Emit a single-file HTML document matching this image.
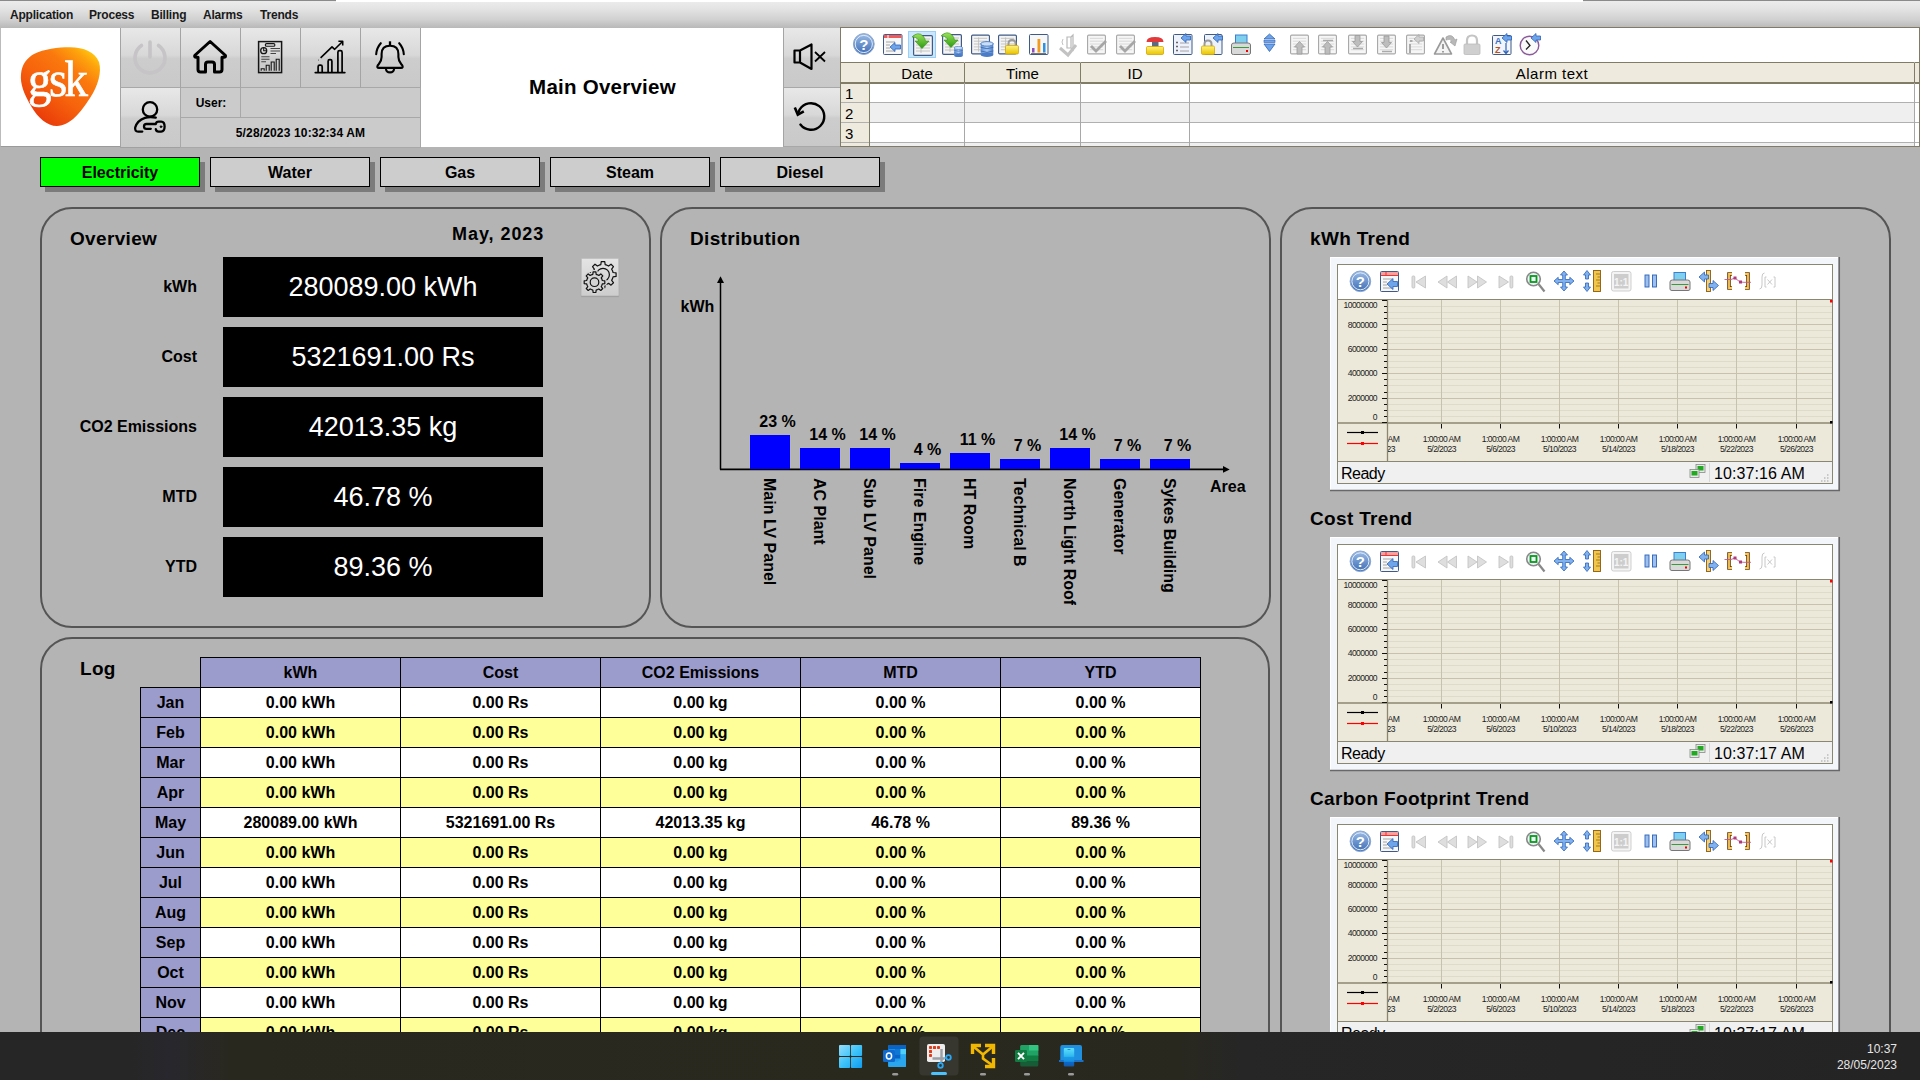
<!DOCTYPE html>
<html><head><meta charset="utf-8">
<style>
*{margin:0;padding:0;box-sizing:border-box}
html,body{width:1920px;height:1080px;overflow:hidden}
body{position:relative;background:#b4b4b4;font-family:"Liberation Sans",sans-serif;color:#000}
.a{position:absolute}
.b{font-weight:bold}
/* menu */
#menu{left:0;top:0;width:1920px;height:28px;background:linear-gradient(#ececec,#e3e3e3 30%,#d0d0d0 70%,#b8b8b8);border-top:1px solid #8a8a8a}
#menu span{position:absolute;top:7px;font-size:12px;font-weight:bold;color:#1a1a1a;letter-spacing:-0.2px}
/* header */
.hbtn{position:absolute;background:linear-gradient(#e8e8e8,#d8d8d8 46%,#cdcdcd 52%,#c9c9c9);border-left:1px solid #a4a4a4;border-bottom:1px solid #a8a8a8}
.cell{position:absolute;background:#cbcbcb;border-left:1px solid #a8a8a8;border-bottom:1px solid #a8a8a8}
/* tabs */
.tab{position:absolute;top:157px;width:160px;height:30px;border:1px solid #000;background:#cdcdcd;font-size:16px;font-weight:bold;text-align:center;line-height:29px;box-shadow:5px 5px 0 #7b7b7b}
/* panels */
.panel{position:absolute;border:2px solid #555;border-radius:32px}
.ptitle{position:absolute;font-size:19px;font-weight:bold;letter-spacing:0.33px}
.lbl{position:absolute;font-size:16px;font-weight:bold;text-align:right;width:160px}
.val{position:absolute;left:223px;width:320px;height:60px;background:#000;color:#fff;font-size:27px;text-align:center;line-height:60px}
/* taskbar */
#task{left:0;top:1032px;width:1920px;height:48px;background:linear-gradient(90deg,#262626 0,#262626 130px,#28272d 170px,#29281f 230px,#2a291e 900px,#29281f 1180px,#262626 1240px,#242424 1920px)}
</style></head><body>

<div id="menu" class="a">
<div class="a" style="left:336px;top:-1px;width:1247px;height:2px;background:#fff"></div>
<span style="left:10px">Application</span>
<span style="left:89px">Process</span>
<span style="left:151px">Billing</span>
<span style="left:203px">Alarms</span>
<span style="left:260px">Trends</span>
</div>

<!-- header -->
<div class="a" style="left:0;top:28px;width:120px;height:119px;background:#fff;border-left:1px solid #bbb;border-bottom:1px solid #9a9a9a"></div>
<div class="hbtn" style="left:120px;top:28px;width:60px;height:60px"></div>
<div class="hbtn" style="left:180px;top:28px;width:60px;height:60px"></div>
<div class="hbtn" style="left:240px;top:28px;width:60px;height:60px"></div>
<div class="hbtn" style="left:300px;top:28px;width:60px;height:60px"></div>
<div class="hbtn" style="left:360px;top:28px;width:61px;height:60px;border-right:1px solid #a4a4a4"></div>
<div class="hbtn" style="left:120px;top:88px;width:60px;height:60px;border-bottom-color:#a0a0a0"></div>
<div class="cell" style="left:180px;top:88px;width:60px;height:30px"></div>
<div class="cell" style="left:240px;top:88px;width:181px;height:30px;border-right:1px solid #a8a8a8"></div>
<div class="cell" style="left:180px;top:118px;width:241px;height:30px;border-right:1px solid #a8a8a8"></div>
<div class="a b" style="left:181px;top:96px;width:60px;text-align:center;font-size:12px">User:</div>
<div class="a b" style="left:180px;top:126px;width:241px;text-align:center;font-size:12px;letter-spacing:0.15px">5/28/2023 10:32:34 AM</div>
<div class="a" style="left:421px;top:28px;width:363px;height:119px;background:#fff"></div>
<div class="hbtn" style="left:783px;top:28px;width:57px;height:60px"></div>
<div class="hbtn" style="left:783px;top:88px;width:57px;height:59px"></div>
<div class="a b" style="left:421px;top:75px;width:363px;text-align:center;font-size:20.5px;letter-spacing:0.25px">Main Overview</div>
<svg class="a" style="left:0;top:0" width="850" height="150" viewBox="0 0 850 150">
<defs>
<linearGradient id="gskg" x1="0.92" y1="0.08" x2="0.2" y2="0.95">
<stop offset="0" stop-color="#ffc60e"/>
<stop offset="0.1" stop-color="#fda40c"/>
<stop offset="0.3" stop-color="#fa780e"/>
<stop offset="0.6" stop-color="#f6620c"/>
<stop offset="1" stop-color="#e8360a"/>
</linearGradient>
</defs>
<path d="M57 126 C47 126 38 118 31 106 C24 94 20 84 21 74 C22 64 27 58 34 54 C44 49 58 47.3 70 47.3 C84 47.5 95 52 99 62 C102 72 98 86 90 98 C81 112 70 126 57 126 Z" fill="url(#gskg)"/>
<g fill="none" stroke="#c6c4c6" stroke-width="3.6" stroke-linecap="round">
<path d="M141.5 45.5 A15 15 0 1 0 158.5 45.5"/>
<path d="M150 42 L150 57"/>
</g>
<path d="M205.5 72 L205.5 64.5 Q205.5 62 208 62 L212 62 Q214.5 62 214.5 64.5 L214.5 72 L219.5 72 Q222 72 222 69.5 L222 57.2 L224 57.2 Q226.5 57 225 55 L210.1 41.5 L195.2 55 Q193.7 57 196 57.2 L198 57.2 L198 69.5 Q198 72 200.5 72 Z" fill="none" stroke="#000" stroke-width="3" stroke-linejoin="round"/>
<g fill="none" stroke="#151515" stroke-width="1.5">
<rect x="258.6" y="41.6" width="23" height="31"/>
<rect x="265.3" y="43.6" width="9.6" height="2.6" rx="1.3" stroke-width="1.1"/>
<circle cx="263.7" cy="50.7" r="3" stroke-width="1.3"/>
<path d="M263.7 47.7 L263.7 50.7 L266.7 50.7" stroke-width="1.1"/>
<path d="M270.5 48.5 H280 M270.5 51 H280 M270.5 53.5 H276 M261.3 56.8 H269.5 M261.3 59.2 H269.5 M261.3 61.7 H266" stroke-width="1.1" stroke="#444"/>
<path d="M261.2 70.8 V68.7 H264.2 V70.8 M266.2 70.8 V65.3 H269.2 V70.8 M271.2 70.8 V62 H274.2 V70.8 M276.2 70.8 V59.3 H279.2 V70.8" stroke-width="1.1"/>
</g>
<g fill="none" stroke="#000" stroke-width="1.7" stroke-linejoin="round">
<path d="M315.3 72.6 H344.8" stroke-linecap="round" stroke-width="1.8"/>
<path d="M318.1 72.2 V66.8 Q318.1 65.2 319.7 65.2 H320.6 Q322.2 65.2 322.2 66.8 V72.2"/>
<path d="M328.1 72.2 V61.3 Q328.1 59.7 329.7 59.7 H330.3 Q331.9 59.7 331.9 61.3 V72.2"/>
<path d="M337.9 72.2 V52.3 Q337.9 50.7 339.5 50.7 H340.5 Q342.1 50.7 342.1 52.3 V72.2"/>
<path d="M320.6 57.8 L332 46.8 L334.7 49.3 L342.3 41.8" stroke-width="1.6"/>
<path d="M338.4 41.3 H342.7 V45.6" stroke-width="1.6"/>
<circle cx="318.5" cy="60" r="0.5" fill="#333" stroke="none"/>
</g>
<g fill="none" stroke="#000" stroke-width="2.1" stroke-linecap="round" stroke-linejoin="round">
<path d="M390 41.3 V45.6" stroke-linecap="butt" stroke-width="2.3"/>
<path d="M381.6 57 V54 Q381.6 45.8 390 45.8 Q398.4 45.8 398.4 54 V57 Q398.4 61 401.3 64.3 L402.2 65.3 Q403.6 67.9 401 67.9 H379 Q376.4 67.9 377.8 65.3 L378.7 64.3 Q381.6 61 381.6 57 Z"/>
<path d="M385.8 68.3 Q386.3 72.4 390 72.4 Q393.7 72.4 394.2 68.3"/>
<path d="M380.8 43.2 Q376.6 47.8 376.2 54.3"/>
<path d="M399.2 43.2 Q403.4 47.8 403.8 54.3"/>
</g>
<g fill="none" stroke="#000" stroke-width="2.3" stroke-linecap="round" stroke-linejoin="round">
<circle cx="150" cy="109.4" r="7.2"/>
<path d="M155.8 117.6 Q150 116.3 145 117.8 Q137 120.5 135.2 127.5 Q134.6 131.6 138.2 131.6 H142.3"/>
<path d="M150.8 128.8 H146.5 Q144 128.8 144 126.4 Q144 124 146.5 124 H155.8 Q156.3 121.6 158.6 121.6 H161.2 Q164.6 121.6 164.6 126.6 Q164.6 131.6 161.2 131.6 H158.6 Q156.3 131.6 155.8 129.2"/>
<circle cx="161" cy="126.7" r="0.9" fill="#000" stroke-width="0.8"/>
</g>
<g fill="none" stroke="#000" stroke-width="2.2" stroke-linejoin="round">
<path d="M794.5 50.5 H800 L811.5 44.5 V69 L800 62.5 H794.5 Z M800 50.5 V62.5"/>
<path d="M815 52 L825 61.5 M825 52 L815 61.5" stroke-width="1.8"/>
</g>
<g fill="none" stroke="#000" stroke-width="2.4" stroke-linecap="round">
<path d="M800.4 124.6 A13.3 13.3 0 1 0 799.6 109.6 L798.3 112.8"/>
<path d="M794.8 107.6 L797.8 114.6 L803.8 111.4" stroke-width="2.6" stroke-linejoin="miter" stroke-linecap="butt"/>
</g>
</svg>
<div class="a" style="left:28px;top:48px;width:70px;height:62px;color:#fff;font-family:'Liberation Serif',serif;font-size:51px;line-height:62px;letter-spacing:-2.8px;-webkit-text-stroke:0.7px #fff;transform:scale(0.92,1);transform-origin:0 0">gsk</div>


<!-- alarm control -->
<div class="a" style="left:840px;top:27px;width:1080px;height:120px;background:#fff;border:1px solid #7f7b64;overflow:hidden">
 <div class="a" style="left:0;top:34px;width:1078px;height:21px;background:#eeeadd;border-top:1px solid #807c66;border-bottom:1px solid #807c66"></div>
 <div class="a" style="left:0;top:55px;width:28px;height:70px;background:#eeeadd"></div>
 <div class="a" style="left:28px;top:75px;width:1046px;height:20px;background:#efefef"></div>
 <div class="a" style="left:28px;top:115px;width:1046px;height:20px;background:#efefef"></div>
 <div class="a" style="left:0;top:74px;width:1078px;height:1px;background:#b0b0b0"></div>
 <div class="a" style="left:0;top:94px;width:1078px;height:1px;background:#b0b0b0"></div>
 <div class="a" style="left:0;top:114px;width:1078px;height:1px;background:#b0b0b0"></div>
 <div class="a" style="left:0;top:55px;width:1078px;height:1px;background:#807c66"></div>
 <div class="a" style="left:28px;top:34px;width:1px;height:90px;background:#807c66"></div>
 <div class="a" style="left:123px;top:34px;width:1px;height:90px;background:#a8a8a8"></div>
 <div class="a" style="left:239px;top:34px;width:1px;height:90px;background:#a8a8a8"></div>
 <div class="a" style="left:348px;top:34px;width:1px;height:90px;background:#a8a8a8"></div>
 <div class="a" style="left:1073px;top:34px;width:1px;height:90px;background:#a8a8a8"></div>
 <div class="a" style="left:123px;top:35px;width:1px;height:20px;background:#807c66"></div>
 <div class="a" style="left:239px;top:35px;width:1px;height:20px;background:#807c66"></div>
 <div class="a" style="left:348px;top:35px;width:1px;height:20px;background:#807c66"></div>
 <div class="a" style="left:1073px;top:35px;width:1px;height:20px;background:#807c66"></div>
 <div class="a" style="left:29px;top:37px;width:94px;text-align:center;font-size:15px">Date</div>
 <div class="a" style="left:124px;top:37px;width:115px;text-align:center;font-size:15px">Time</div>
 <div class="a" style="left:240px;top:37px;width:108px;text-align:center;font-size:15px">ID</div>
 <div class="a" style="left:349px;top:37px;width:724px;text-align:center;font-size:15px;letter-spacing:0.5px">Alarm text</div>
 <div class="a" style="left:4px;top:57px;font-size:15px">1</div>
 <div class="a" style="left:4px;top:77px;font-size:15px">2</div>
 <div class="a" style="left:4px;top:97px;font-size:15px">3</div>
</div>
<div class="a" style="left:908px;top:31px;width:28px;height:27px;background:#cce6fb;border:1px solid #99d0f8"></div>
<svg class="a" style="left:840px;top:28px" width="720" height="34" viewBox="840 28 720 34">
<defs>
 <linearGradient id="blu" x1="0" y1="0" x2="0" y2="1"><stop offset="0" stop-color="#9dbde6"/><stop offset="1" stop-color="#3d6db5"/></linearGradient>
 <linearGradient id="grn" x1="0" y1="0" x2="0" y2="1"><stop offset="0" stop-color="#9be35a"/><stop offset="1" stop-color="#2a9a10"/></linearGradient>
 <linearGradient id="yel" x1="0" y1="0" x2="0" y2="1"><stop offset="0" stop-color="#fff27a"/><stop offset="1" stop-color="#e9c400"/></linearGradient>
 <linearGradient id="dbg" x1="0" y1="0" x2="1" y2="0"><stop offset="0" stop-color="#5c8fd6"/><stop offset="0.5" stop-color="#a9c9f2"/><stop offset="1" stop-color="#4a7cc8"/></linearGradient>
 <symbol id="doc" viewBox="0 0 20 21"><rect x="0.6" y="0.6" width="18.8" height="19.8" rx="1.2" fill="#f4f4f4" stroke="#3f5a86" stroke-width="1.2"/><path d="M3 4H17M3 7H17M3 10H17M3 13H17M3 16H17M8 3V18" stroke="#bdbdbd" stroke-width="0.9"/></symbol>
 <symbol id="gdoc" viewBox="0 0 20 21"><rect x="0.6" y="0.6" width="18.8" height="19.8" rx="1.2" fill="#f6f6f6" stroke="#a9a9a9" stroke-width="1.2"/><path d="M3 4H17M3 7H17M3 10H17M3 13H17M3 16H17" stroke="#d4d4d4" stroke-width="0.9"/></symbol>
 <symbol id="db" viewBox="0 0 12 14"><rect x="0.5" y="2" width="11" height="10" fill="url(#dbg)"/><ellipse cx="6" cy="2.5" rx="5.5" ry="2" fill="#c8ddf7" stroke="#4a7cc8" stroke-width="0.8"/><ellipse cx="6" cy="12" rx="5.5" ry="2" fill="#4a7cc8"/><path d="M0.5 5.5Q6 8 11.5 5.5M0.5 8.7Q6 11.2 11.5 8.7" stroke="#3d6db5" stroke-width="0.8" fill="none"/></symbol>
 <symbol id="lock" viewBox="0 0 14 15"><path d="M3.5 7V4.5Q3.5 1 7 1Q10.5 1 10.5 4.5V7" fill="none" stroke="#9a9a9a" stroke-width="2"/><rect x="0.5" y="6.5" width="13" height="8.5" rx="1.2" fill="url(#yel)" stroke="#d6a800" stroke-width="0.8"/></symbol>
</defs>
<!-- 1 help -->
<circle cx="863.8" cy="44" r="10.4" fill="url(#blu)" stroke="#8aa6cf" stroke-width="1"/><circle cx="863.8" cy="44" r="8.6" fill="none" stroke="#e2ecf8" stroke-width="1"/>
<text x="863.8" y="49.5" font-size="15" font-weight="bold" fill="#fff" text-anchor="middle" font-family="Liberation Sans">?</text>
<!-- 2 -->
<rect x="883.5" y="34.5" width="18.5" height="20" rx="1" fill="#f7f7f7" stroke="#3f5a86"/><rect x="884" y="35" width="17.5" height="3" fill="#ef5b5b"/><path d="M888 35V38" stroke="#fff"/>
<path d="M886 42H895M886 45H890M886 48H890M886 51H895" stroke="#9a9a9a" stroke-width="0.9"/>
<path d="M890 47L895 42.5V45H900.5V49H895V51.5Z" fill="#6ea4ea" stroke="#2d62b8" stroke-width="0.8"/>
<!-- 3 -->
<use href="#doc" x="913" y="35" width="20" height="21"/>
<path d="M912 37Q918 31 923 36Q925 38 925.5 41H929L922 48.5L915 41H918.5Q918 37.5 913 37Z" fill="url(#grn)" stroke="#2f8e14" stroke-width="0.6"/>
<!-- 4 -->
<use href="#doc" x="942" y="34" width="20" height="21"/>
<path d="M941 36Q947 30 952 35Q954 37 954.5 40H958L951 47.5L944 40H947.5Q947 36.5 942 36Z" fill="url(#grn)" stroke="#2f8e14" stroke-width="0.6"/>
<use href="#db" x="953" y="46" width="11" height="11"/>
<!-- 5 -->
<use href="#doc" x="971" y="34" width="19" height="21"/>
<use href="#db" x="980" y="41" width="14" height="16"/>
<!-- 6 -->
<use href="#doc" x="998" y="34" width="19" height="21"/>
<use href="#lock" x="1005" y="38" width="14" height="17"/>
<!-- 7 -->
<rect x="1029.5" y="34.5" width="18.5" height="20" rx="1" fill="#f7f7f7" stroke="#3f5a86"/>
<rect x="1032" y="48" width="2.5" height="4.5" fill="#8a4fb8"/><rect x="1037.5" y="39" width="2.8" height="13.5" fill="#f29a1e"/><rect x="1043" y="43" width="2.5" height="9.5" fill="#2e92e0"/><path d="M1031 53.5H1046" stroke="#555" stroke-width="0.8"/>
<!-- 8 disabled speaker -->
<path d="M1067 37H1071V48H1067Z M1071 37L1073 35V50L1071 48" fill="none" stroke="#b8b8b8" stroke-width="1.2"/>
<path d="M1060 48L1068 55L1076 45" fill="none" stroke="#c2c2c2" stroke-width="3"/>
<path d="M1063 39Q1061 42 1063 45" fill="none" stroke="#c2c2c2" stroke-width="1"/>
<!-- 9, 10 gray doc check -->
<use href="#gdoc" x="1087" y="34" width="19" height="21"/>
<path d="M1091 46L1096 51L1106 41" fill="none" stroke="#a6a6a6" stroke-width="2.8"/>
<use href="#gdoc" x="1116" y="34" width="19" height="21"/>
<path d="M1120 46L1125 51L1135 41" fill="none" stroke="#a6a6a6" stroke-width="2.8"/>
<!-- 11 red button -->
<path d="M1146.5 42Q1146.5 37 1155 37Q1163.5 37 1163.5 42Z" fill="#e23a3a"/><rect x="1152" y="42" width="6.5" height="5" fill="#5d6a80"/>
<rect x="1146.5" y="46.5" width="17" height="8" rx="1.2" fill="url(#yel)" stroke="#d4a600" stroke-width="0.8"/>
<!-- 12 list arrow -->
<rect x="1173.5" y="34.5" width="18.5" height="20" rx="1" fill="#eef3fb" stroke="#3f5a86"/>
<path d="M1176 42.5H1178M1176 46.5H1178M1176 50.5H1178" stroke="#666" stroke-width="1.5"/><path d="M1180 43H1189M1180 47H1189M1180 51H1189" stroke="#9a9a9a" stroke-width="0.9"/>
<path d="M1181 38L1186 33.5V36H1190.5V40H1186V42.5Z" fill="#6ea4ea" stroke="#2d62b8" stroke-width="0.8"/>
<!-- 13 lock arrow -->
<rect x="1204.5" y="34.5" width="17.5" height="20" rx="1" fill="#eef3fb" stroke="#3f5a86"/>
<use href="#lock" x="1201" y="38" width="14" height="18"/>
<path d="M1213 38L1218 33.5V36H1222.5V40H1218V42.5Z" fill="#6ea4ea" stroke="#2d62b8" stroke-width="0.8"/>
<!-- 14 printer -->
<rect x="1235.5" y="35" width="11.5" height="11" fill="#7fd0ef" stroke="#3b7fd0"/>
<path d="M1231.5 45Q1231.5 43 1234 43H1248Q1250.5 43 1250.5 45V53Q1250.5 54.5 1248.5 54.5H1233.5Q1231.5 54.5 1231.5 53Z" fill="#d9d9d9" stroke="#777"/>
<path d="M1233 47.5H1249" stroke="#3a9a3a" stroke-width="1"/><rect x="1246" y="50" width="2" height="2" fill="#e00"/>
<!-- 15 up/down -->
<path d="M1264 39L1269.5 34L1275 39Z M1264 44L1269.5 51.5L1275 44Z" fill="#6ea4ea" stroke="#2d62b8" stroke-width="0.8"/><rect x="1264" y="40.5" width="11" height="2" fill="#6ea4ea" stroke="#2d62b8" stroke-width="0.6"/>
<!-- 16-19 gray docs arrows -->
<use href="#gdoc" x="1290" y="34" width="19" height="21"/><path d="M1294.5 47L1299.5 41.5L1304.5 47H1302V54H1297V47Z" fill="#bdbdbd" stroke="#9a9a9a" stroke-width="0.8"/>
<use href="#gdoc" x="1318" y="34" width="19" height="21"/><path d="M1322.5 47L1327.5 41.5L1332.5 47H1330V54H1325V47Z" fill="#bdbdbd" stroke="#9a9a9a" stroke-width="0.8"/><path d="M1323 40.5H1333" stroke="#aaa" stroke-width="1.5"/>
<use href="#gdoc" x="1348" y="34" width="19" height="21"/><path d="M1352.5 41.5L1357.5 47L1362.5 41.5H1360V35.5H1355V41.5Z" fill="#bdbdbd" stroke="#9a9a9a" stroke-width="0.8"/><path d="M1353 48.5H1363" stroke="#aaa" stroke-width="1.5"/>
<use href="#gdoc" x="1377" y="34" width="19" height="21"/><path d="M1381.5 42.5L1386.5 48L1391.5 42.5H1389V36H1384V42.5Z" fill="#bdbdbd" stroke="#9a9a9a" stroke-width="0.8"/><path d="M1382 51.5H1392" stroke="#aaa" stroke-width="1.5"/>
<use href="#gdoc" x="1406" y="34" width="19" height="21"/><path d="M1410 41H1412.5M1410 44V53" stroke="#aaa" stroke-width="2"/><path d="M1414 39L1419 34.5V37H1423.5V41H1419V43.5Z" fill="#d0d0d0" stroke="#aaa" stroke-width="0.8"/>
<!-- 21 warning -->
<path d="M1443 38L1434.5 54H1451.5Z" fill="#f4f4f4" stroke="#9a9a9a" stroke-width="1.6" stroke-linejoin="round"/><path d="M1443 44V49M1443 51V52.5" stroke="#888" stroke-width="1.6"/>
<path d="M1446 37Q1452 33 1455 40L1457 39L1455 46L1450 42L1452 41.5Q1450 38 1446 40Z" fill="#b8b8b8" stroke="#999" stroke-width="0.6"/>
<!-- 22 gray lock -->
<path d="M1467 44V40.5Q1467 35.5 1472 35.5Q1477 35.5 1477 40.5V44" fill="none" stroke="#c4c4c4" stroke-width="2.2"/><rect x="1464" y="44" width="16" height="10.5" rx="1.2" fill="#cfcfcf" stroke="#bbb" stroke-width="0.8"/>
<!-- 23 AZ -->
<rect x="1492.5" y="35.5" width="18.5" height="19" rx="1" fill="#f2f6fc" stroke="#3f5a86"/>
<text x="1495" y="44" font-size="9" font-weight="bold" fill="#3b6fbf" font-family="Liberation Sans">A</text><text x="1495" y="53" font-size="9" font-weight="bold" fill="#b5551d" font-family="Liberation Sans">Z</text>
<path d="M1506 43V53M1503.5 50.5L1506 53.5L1508.5 50.5" fill="none" stroke="#2d62b8" stroke-width="1.2"/>
<path d="M1502 38L1507 33.5V36H1511.5V40H1507V42.5Z" fill="#6ea4ea" stroke="#2d62b8" stroke-width="0.8"/>
<!-- 24 clock -->
<circle cx="1529.5" cy="45.5" r="9.3" fill="#fafafa" stroke="#8a5a9a" stroke-width="1.4"/><path d="M1526 40.5L1530 45.5L1526 49.5" fill="none" stroke="#222" stroke-width="1.3"/>
<path d="M1531 38L1536 33.5V36H1540.5V40H1536V42.5Z" fill="#6ea4ea" stroke="#2d62b8" stroke-width="0.8"/>
</svg>

<!-- tabs -->
<div class="tab" style="left:40px;background:#00ff00">Electricity</div>
<div class="tab" style="left:210px">Water</div>
<div class="tab" style="left:380px">Gas</div>
<div class="tab" style="left:550px">Steam</div>
<div class="tab" style="left:720px">Diesel</div>

<!-- panels -->
<div class="panel" style="left:40px;top:207px;width:611px;height:421px"></div>
<div class="panel" style="left:660px;top:207px;width:611px;height:421px"></div>
<div class="panel" style="left:1280px;top:207px;width:611px;height:900px"></div>
<div class="panel" style="left:40px;top:637px;width:1230px;height:500px"></div>

<div class="ptitle" style="left:70px;top:228px">Overview</div>
<div class="a b" style="left:452px;top:224px;font-size:18px;letter-spacing:0.95px">May, 2023</div>
<div class="a" style="left:581px;top:258px;width:38px;height:38px;background:linear-gradient(#e4e4e4,#cdcdcd);border:1px solid #c2c2c2;border-radius:1px;box-shadow:0 1px 1px rgba(0,0,0,0.12)"></div>
<svg class="a" style="left:576px;top:252px" width="50" height="50" viewBox="576 252 50 50">
<path d="M599.06 265.18 L600.83 264.63 L601.24 261.62 L604.76 261.62 L605.17 264.63 L606.94 265.18 L608.59 266.05 L611.01 264.21 L613.49 266.69 L611.65 269.11 L612.52 270.76 L613.07 272.53 L616.08 272.94 L616.08 276.46 L613.07 276.87 L612.52 278.64 L611.65 280.29 L613.49 282.71 L611.01 285.19 L608.59 283.35 L606.94 284.22 L605.17 284.77 L604.76 287.78 L601.24 287.78 L600.83 284.77 L599.06 284.22 L597.41 283.35 L594.99 285.19 L592.51 282.71 L594.35 280.29 L593.48 278.64 L592.93 276.87 L589.92 276.46 L589.92 272.94 L592.93 272.53 L593.48 270.76 L594.35 269.11 L592.51 266.69 L594.99 264.21 L597.41 266.05Z" fill="none" stroke="#111" stroke-width="1.2" stroke-linejoin="round"/>
<circle cx="603" cy="274.7" r="6.4" fill="none" stroke="#111" stroke-width="1.2"/>
<path d="M591.44 274.81 L592.82 274.38 L593.12 271.89 L595.88 271.89 L596.18 274.38 L597.56 274.81 L598.84 275.48 L600.81 273.93 L602.77 275.89 L601.22 277.86 L601.89 279.14 L602.32 280.52 L604.81 280.82 L604.81 283.58 L602.32 283.88 L601.89 285.26 L601.22 286.54 L602.77 288.51 L600.81 290.47 L598.84 288.92 L597.56 289.59 L596.18 290.02 L595.88 292.51 L593.12 292.51 L592.82 290.02 L591.44 289.59 L590.16 288.92 L588.19 290.47 L586.23 288.51 L587.78 286.54 L587.11 285.26 L586.68 283.88 L584.19 283.58 L584.19 280.82 L586.68 280.52 L587.11 279.14 L587.78 277.86 L586.23 275.89 L588.19 273.93 L590.16 275.48Z" fill="#d4d4d4" stroke="#d4d4d4" stroke-width="4" stroke-linejoin="round"/>
<path d="M591.44 274.81 L592.82 274.38 L593.12 271.89 L595.88 271.89 L596.18 274.38 L597.56 274.81 L598.84 275.48 L600.81 273.93 L602.77 275.89 L601.22 277.86 L601.89 279.14 L602.32 280.52 L604.81 280.82 L604.81 283.58 L602.32 283.88 L601.89 285.26 L601.22 286.54 L602.77 288.51 L600.81 290.47 L598.84 288.92 L597.56 289.59 L596.18 290.02 L595.88 292.51 L593.12 292.51 L592.82 290.02 L591.44 289.59 L590.16 288.92 L588.19 290.47 L586.23 288.51 L587.78 286.54 L587.11 285.26 L586.68 283.88 L584.19 283.58 L584.19 280.82 L586.68 280.52 L587.11 279.14 L587.78 277.86 L586.23 275.89 L588.19 273.93 L590.16 275.48Z" fill="#d4d4d4" stroke="#111" stroke-width="1.2" stroke-linejoin="round"/>
<circle cx="594.5" cy="282.2" r="4.3" fill="none" stroke="#111" stroke-width="1.2"/>
</svg>
<div class="lbl" style="left:37px;top:278px">kWh</div>
<div class="lbl" style="left:37px;top:348px">Cost</div>
<div class="lbl" style="left:37px;top:418px">CO2 Emissions</div>
<div class="lbl" style="left:37px;top:488px">MTD</div>
<div class="lbl" style="left:37px;top:558px">YTD</div>
<div class="val" style="top:257px">280089.00 kWh</div>
<div class="val" style="top:327px">5321691.00 Rs</div>
<div class="val" style="top:397px">42013.35 kg</div>
<div class="val" style="top:467px">46.78 %</div>
<div class="val" style="top:537px">89.36 %</div>

<div class="ptitle" style="left:690px;top:228px">Distribution</div>
<svg class="a" style="left:660px;top:260px" width="600" height="360" viewBox="660 260 600 360">
<path d="M720.5 469.5V281" stroke="#000" stroke-width="1.5"/><path d="M717 283L720.5 276.3L724 283Z" fill="#000"/>
<path d="M720 469.4H1224" stroke="#000" stroke-width="1.6"/><path d="M1223 466L1229.7 469.4L1223 472.8Z" fill="#000"/>
<rect x="750" y="435" width="40" height="34" fill="#0000ff"/>
<text x="777.5" y="427" font-size="16" font-weight="bold" text-anchor="middle" font-family="Liberation Sans">23 %</text>
<text transform="translate(764,478) rotate(90)" font-size="16" font-weight="bold" font-family="Liberation Sans">Main LV Panel</text>
<rect x="800" y="448" width="40" height="21" fill="#0000ff"/>
<text x="827.5" y="440" font-size="16" font-weight="bold" text-anchor="middle" font-family="Liberation Sans">14 %</text>
<text transform="translate(814,478) rotate(90)" font-size="16" font-weight="bold" font-family="Liberation Sans">AC Plant</text>
<rect x="850" y="448" width="40" height="21" fill="#0000ff"/>
<text x="877.5" y="440" font-size="16" font-weight="bold" text-anchor="middle" font-family="Liberation Sans">14 %</text>
<text transform="translate(864,478) rotate(90)" font-size="16" font-weight="bold" font-family="Liberation Sans">Sub LV Panel</text>
<rect x="900" y="463" width="40" height="6" fill="#0000ff"/>
<text x="927.5" y="455" font-size="16" font-weight="bold" text-anchor="middle" font-family="Liberation Sans">4 %</text>
<text transform="translate(914,478) rotate(90)" font-size="16" font-weight="bold" font-family="Liberation Sans">Fire Engine</text>
<rect x="950" y="453" width="40" height="16" fill="#0000ff"/>
<text x="977.5" y="445" font-size="16" font-weight="bold" text-anchor="middle" font-family="Liberation Sans">11 %</text>
<text transform="translate(964,478) rotate(90)" font-size="16" font-weight="bold" font-family="Liberation Sans">HT Room</text>
<rect x="1000" y="459" width="40" height="10" fill="#0000ff"/>
<text x="1027.5" y="451" font-size="16" font-weight="bold" text-anchor="middle" font-family="Liberation Sans">7 %</text>
<text transform="translate(1014,478) rotate(90)" font-size="16" font-weight="bold" font-family="Liberation Sans">Technical B</text>
<rect x="1050" y="448" width="40" height="21" fill="#0000ff"/>
<text x="1077.5" y="440" font-size="16" font-weight="bold" text-anchor="middle" font-family="Liberation Sans">14 %</text>
<text transform="translate(1064,478) rotate(90)" font-size="16" font-weight="bold" font-family="Liberation Sans">North Light Roof</text>
<rect x="1100" y="459" width="40" height="10" fill="#0000ff"/>
<text x="1127.5" y="451" font-size="16" font-weight="bold" text-anchor="middle" font-family="Liberation Sans">7 %</text>
<text transform="translate(1114,478) rotate(90)" font-size="16" font-weight="bold" font-family="Liberation Sans">Generator</text>
<rect x="1150" y="459" width="40" height="10" fill="#0000ff"/>
<text x="1177.5" y="451" font-size="16" font-weight="bold" text-anchor="middle" font-family="Liberation Sans">7 %</text>
<text transform="translate(1164,478) rotate(90)" font-size="16" font-weight="bold" font-family="Liberation Sans">Sykes Building</text>
<text x="680.5" y="312" font-size="16" font-weight="bold" font-family="Liberation Sans">kWh</text>
<text x="1210" y="492" font-size="16" font-weight="bold" font-family="Liberation Sans">Area</text>
</svg>
<svg class="a" style="left:1328px;top:255px" width="514" height="238" viewBox="1328 255 514 238">
<rect x="1330" y="257" width="510" height="234" fill="#f3f6fb"/>
<path d="M1330 257.5H1838.5M1330.5 257V490" stroke="#fff" stroke-width="1"/><path d="M1839.2 257V490.5H1330" fill="none" stroke="#686868" stroke-width="1.7"/>
<rect x="1337.5" y="264.5" width="495" height="219" fill="#ece9da" stroke="#8a8670" stroke-width="1"/>
<rect x="1338" y="265" width="494" height="34" fill="#fff"/>
<path d="M1338 299.5H1832" stroke="#8a8670" stroke-width="1.2"/>
<path d="M1388 306.5H1832 M1388 312.5H1832 M1388 318.5H1832 M1388 330.5H1832 M1388 337.5H1832 M1388 343.5H1832 M1388 355.5H1832 M1388 361.5H1832 M1388 367.5H1832 M1388 379.5H1832 M1388 385.5H1832 M1388 392.5H1832 M1388 404.5H1832 M1388 410.5H1832 M1388 416.5H1832" stroke="#dedbca" stroke-width="1"/>
<path d="M1388 324.5H1832 M1388 349.5H1832 M1388 373.5H1832 M1388 398.5H1832 M1441.5 300V422 M1500.5 300V422 M1559.5 300V422 M1618.5 300V422 M1677.5 300V422 M1736.5 300V422 M1796.5 300V422" stroke="#c6c2ac" stroke-width="1"/>
<path d="M1387.5 300V423 M1338 423H1832 M1387.5 423V461" stroke="#8a8670" stroke-width="1.3"/>
<path d="M1382 300.5H1387 M1384 306.5H1387 M1384 312.5H1387 M1384 318.5H1387 M1382 324.5H1387 M1384 330.5H1387 M1384 337.5H1387 M1384 343.5H1387 M1382 349.5H1387 M1384 355.5H1387 M1384 361.5H1387 M1384 367.5H1387 M1382 373.5H1387 M1384 379.5H1387 M1384 385.5H1387 M1384 392.5H1387 M1382 398.5H1387 M1384 404.5H1387 M1384 410.5H1387 M1384 416.5H1387 M1382 422.5H1387 M1441.5 424V428.5 M1500.5 424V428.5 M1559.5 424V428.5 M1618.5 424V428.5 M1677.5 424V428.5 M1736.5 424V428.5 M1796.5 424V428.5" stroke="#111" stroke-width="1"/>
<text x="1377" y="308.0" font-size="8.6" text-anchor="end" letter-spacing="-0.6" fill="#222" font-family="Liberation Sans">10000000</text>
<text x="1377" y="327.5" font-size="8.6" text-anchor="end" letter-spacing="-0.6" fill="#222" font-family="Liberation Sans">8000000</text>
<text x="1377" y="352.0" font-size="8.6" text-anchor="end" letter-spacing="-0.6" fill="#222" font-family="Liberation Sans">6000000</text>
<text x="1377" y="376.3" font-size="8.6" text-anchor="end" letter-spacing="-0.6" fill="#222" font-family="Liberation Sans">4000000</text>
<text x="1377" y="400.8" font-size="8.6" text-anchor="end" letter-spacing="-0.6" fill="#222" font-family="Liberation Sans">2000000</text>
<text x="1377" y="420.0" font-size="8.6" text-anchor="end" letter-spacing="-0.6" fill="#222" font-family="Liberation Sans">0</text>
<text x="1441.5" y="442" font-size="8.6" text-anchor="middle" letter-spacing="-0.6" fill="#222" font-family="Liberation Sans">1:00:00 AM</text>
<text x="1441.5" y="452" font-size="8.6" text-anchor="middle" letter-spacing="-0.6" fill="#222" font-family="Liberation Sans">5/2/2023</text>
<text x="1500.5" y="442" font-size="8.6" text-anchor="middle" letter-spacing="-0.6" fill="#222" font-family="Liberation Sans">1:00:00 AM</text>
<text x="1500.5" y="452" font-size="8.6" text-anchor="middle" letter-spacing="-0.6" fill="#222" font-family="Liberation Sans">5/6/2023</text>
<text x="1559.5" y="442" font-size="8.6" text-anchor="middle" letter-spacing="-0.6" fill="#222" font-family="Liberation Sans">1:00:00 AM</text>
<text x="1559.5" y="452" font-size="8.6" text-anchor="middle" letter-spacing="-0.6" fill="#222" font-family="Liberation Sans">5/10/2023</text>
<text x="1618.5" y="442" font-size="8.6" text-anchor="middle" letter-spacing="-0.6" fill="#222" font-family="Liberation Sans">1:00:00 AM</text>
<text x="1618.5" y="452" font-size="8.6" text-anchor="middle" letter-spacing="-0.6" fill="#222" font-family="Liberation Sans">5/14/2023</text>
<text x="1677.5" y="442" font-size="8.6" text-anchor="middle" letter-spacing="-0.6" fill="#222" font-family="Liberation Sans">1:00:00 AM</text>
<text x="1677.5" y="452" font-size="8.6" text-anchor="middle" letter-spacing="-0.6" fill="#222" font-family="Liberation Sans">5/18/2023</text>
<text x="1736.5" y="442" font-size="8.6" text-anchor="middle" letter-spacing="-0.6" fill="#222" font-family="Liberation Sans">1:00:00 AM</text>
<text x="1736.5" y="452" font-size="8.6" text-anchor="middle" letter-spacing="-0.6" fill="#222" font-family="Liberation Sans">5/22/2023</text>
<text x="1796.5" y="442" font-size="8.6" text-anchor="middle" letter-spacing="-0.6" fill="#222" font-family="Liberation Sans">1:00:00 AM</text>
<text x="1796.5" y="452" font-size="8.6" text-anchor="middle" letter-spacing="-0.6" fill="#222" font-family="Liberation Sans">5/26/2023</text>
<svg x="1388" y="430" width="30" height="30" viewBox="1388 430 30 30"><text x="1380.5" y="442" font-size="8.6" text-anchor="middle" letter-spacing="-0.6" fill="#222" font-family="Liberation Sans">1:00:00 AM</text><text x="1380.5" y="452" font-size="8.6" text-anchor="middle" letter-spacing="-0.6" fill="#222" font-family="Liberation Sans">5/1/2023</text></svg>
<path d="M1347 432.5H1378" stroke="#000" stroke-width="1.2"/><rect x="1361" y="431" width="3" height="3" fill="#000"/>
<path d="M1347 443.5H1378" stroke="#f00" stroke-width="1.2"/><rect x="1361" y="442" width="3" height="3" fill="#f00"/>
<rect x="1830" y="300" width="2.5" height="2.5" fill="#f00"/><rect x="1830" y="421" width="2.5" height="2.5" fill="#000"/>
<rect x="1338" y="462" width="494" height="21" fill="#f0f0f0"/>
<path d="M1338 461.5H1832" stroke="#8a8670" stroke-width="1"/>
<path d="M1709.5 463V482" stroke="#d8d8d8" stroke-width="1"/>
<text x="1341" y="478.5" font-size="16" fill="#000" font-family="Liberation Sans" letter-spacing="-0.5">Ready</text>
<text x="1714" y="478.5" font-size="16" fill="#000" font-family="Liberation Sans" letter-spacing="0.1">10:37:16 AM</text>
<rect x="1696" y="464.5" width="9" height="8" fill="#e8e8e8" stroke="#888" stroke-width="0.8"/><rect x="1697.5" y="466" width="6" height="4.5" fill="#1faa1f"/>
<rect x="1690" y="469.5" width="9" height="8" fill="#e8e8e8" stroke="#888" stroke-width="0.8"/><rect x="1691.5" y="471" width="6" height="4.5" fill="#1faa1f"/>
<path d="M1827 481h1.5M1824 481h1.5M1821 481h1.5M1827 478h1.5M1824 478h1.5M1827 475h1.5" stroke="#bbb" stroke-width="1.5"/>
<g transform="translate(0,0)">
<circle cx="1360.4" cy="281.3" r="10.3" fill="url(#blu)" stroke="#8aa6cf" stroke-width="1"/><circle cx="1360.4" cy="281.3" r="8.5" fill="none" stroke="#e2ecf8" stroke-width="1"/>
<text x="1360.4" y="286.8" font-size="15" font-weight="bold" fill="#fff" text-anchor="middle" font-family="Liberation Sans">?</text>
<rect x="1380.5" y="271.5" width="18" height="20" rx="1" fill="#f7f7f7" stroke="#3f5a86"/><rect x="1381" y="272" width="17" height="3.5" fill="#f6a0a0"/><path d="M1381 275.5H1398M1386 272V275.5" stroke="#e33" stroke-width="1"/>
<path d="M1383 279H1392M1383 282H1387M1383 285H1387M1383 288H1392" stroke="#9a9a9a" stroke-width="0.9"/>
<path d="M1387 284L1393 278.5V281.5H1397.5V286.5H1393V289.5Z" fill="#6ea4ea" stroke="#2d62b8" stroke-width="0.8"/>
<g fill="#dedede" stroke="#c4c4c4" stroke-width="0.9">
<rect x="1412" y="276" width="2.8" height="12" rx="1"/><path d="M1425.5 276V288L1416 282Z"/>
<path d="M1447 276V288L1438 282Z M1456.5 276V288L1447.5 282Z"/>
<path d="M1468 276V288L1477 282Z M1477.5 276V288L1486.5 282Z"/>
<path d="M1499 276V288L1508.5 282Z"/><rect x="1510" y="276" width="2.8" height="12" rx="1"/>
</g>
<circle cx="1533.5" cy="279" r="6.8" fill="#eef4fb" stroke="#888" stroke-width="1.6"/><rect x="1530.5" y="276" width="6" height="6" fill="none" stroke="#0a9a1a" stroke-width="1.8"/><path d="M1538.5 284L1544.5 291.5" stroke="#888" stroke-width="2.2"/>
<path d="M1564 271L1567.5 275H1565.3V279.5H1569.8V277.3L1574 281L1569.8 284.7V282.5H1565.3V287H1567.5L1564 291L1560.5 287H1562.7V282.5H1558.2V284.7L1554 281L1558.2 277.3V279.5H1562.7V275H1560.5Z" fill="#7fb2ef" stroke="#2d62b8" stroke-width="0.8"/>
<path d="M1587 270.5L1590.5 275H1588.5V279H1585.5V275H1583.5Z M1587 291.5L1590.5 287H1588.5V283H1585.5V287H1583.5Z" fill="#7fb2ef" stroke="#2d62b8" stroke-width="0.8"/>
<rect x="1593.5" y="270.5" width="7" height="21" fill="#f2c64a" stroke="#8a5a10" stroke-width="0.9"/><path d="M1596 274H1600M1597.5 277H1600M1596 280H1600M1597.5 283H1600M1596 286H1600" stroke="#8a5a10" stroke-width="0.7"/>
<rect x="1611.5" y="271.5" width="19.5" height="19.5" rx="2" fill="#f4f4f4" stroke="#cfcfcf"/><rect x="1614" y="274" width="14.5" height="14.5" fill="#cdcdcd"/><text x="1621.2" y="285.5" font-size="10" font-weight="bold" fill="#f4f4f4" text-anchor="middle" font-family="Liberation Sans">1:1</text>
<rect x="1645" y="275" width="4" height="12" fill="#9cc0f0" stroke="#2d62b8" stroke-width="0.9"/><rect x="1652.5" y="275" width="4" height="12" fill="#9cc0f0" stroke="#2d62b8" stroke-width="0.9"/>
<rect x="1674" y="272.5" width="11.5" height="10" fill="#7fd0ef" stroke="#3b7fd0"/>
<path d="M1670 282Q1670 280 1672.5 280H1687.5Q1690 280 1690 282V289Q1690 290.5 1688 290.5H1672Q1670 290.5 1670 289Z" fill="#d9d9d9" stroke="#777"/>
<path d="M1671.5 284.5H1688.5" stroke="#3a9a3a" stroke-width="1"/><rect x="1685" y="286.5" width="2" height="2" fill="#e00"/>
<rect x="1706.5" y="270.5" width="4" height="21" fill="#f2d27a" stroke="#8a5a10" stroke-width="0.9"/>
<path d="M1699 277L1704.5 272V275H1708.5V279H1704.5V282Z M1718.5 285.5L1713 280.5V283.5H1709V287.5H1713V290.5Z" fill="#7fb2ef" stroke="#2d62b8" stroke-width="0.8"/>
<path d="M1732 274H1729V288H1732 M1745 274H1748V288H1745" fill="none" stroke="#6a3a08" stroke-width="3.6"/><path d="M1732 274H1729V288H1732 M1745 274H1748V288H1745" fill="none" stroke="#f7c85a" stroke-width="1.8"/>
<path d="M1724.5 279.5H1731L1735 278L1740 282L1744 282.3H1751" fill="none" stroke="#c05a90" stroke-width="1" opacity="0.9"/><rect x="1733.5" y="276.5" width="3" height="3" fill="#b03a7a"/><rect x="1739" y="280.5" width="3" height="3" fill="#b03a7a"/>
<path d="M1759.5 289Q1762 289 1762 285V277Q1762 273 1764.5 273" fill="none" stroke="#c8c8c8" stroke-width="1"/><path d="M1766.5 277H1765V287H1766.5 M1773.5 277H1775V287H1773.5 M1767.5 279.5L1772 284.5M1772 279.5L1767.5 284.5" fill="none" stroke="#c8c8c8" stroke-width="1"/>
</g>
</svg>
<svg class="a" style="left:1328px;top:535px" width="514" height="238" viewBox="1328 535 514 238">
<rect x="1330" y="537" width="510" height="234" fill="#f3f6fb"/>
<path d="M1330 537.5H1838.5M1330.5 537V770" stroke="#fff" stroke-width="1"/><path d="M1839.2 537V770.5H1330" fill="none" stroke="#686868" stroke-width="1.7"/>
<rect x="1337.5" y="544.5" width="495" height="219" fill="#ece9da" stroke="#8a8670" stroke-width="1"/>
<rect x="1338" y="545" width="494" height="34" fill="#fff"/>
<path d="M1338 579.5H1832" stroke="#8a8670" stroke-width="1.2"/>
<path d="M1388 586.5H1832 M1388 592.5H1832 M1388 598.5H1832 M1388 610.5H1832 M1388 617.5H1832 M1388 623.5H1832 M1388 635.5H1832 M1388 641.5H1832 M1388 647.5H1832 M1388 659.5H1832 M1388 665.5H1832 M1388 672.5H1832 M1388 684.5H1832 M1388 690.5H1832 M1388 696.5H1832" stroke="#dedbca" stroke-width="1"/>
<path d="M1388 604.5H1832 M1388 629.5H1832 M1388 653.5H1832 M1388 678.5H1832 M1441.5 580V702 M1500.5 580V702 M1559.5 580V702 M1618.5 580V702 M1677.5 580V702 M1736.5 580V702 M1796.5 580V702" stroke="#c6c2ac" stroke-width="1"/>
<path d="M1387.5 580V703 M1338 703H1832 M1387.5 703V741" stroke="#8a8670" stroke-width="1.3"/>
<path d="M1382 580.5H1387 M1384 586.5H1387 M1384 592.5H1387 M1384 598.5H1387 M1382 604.5H1387 M1384 610.5H1387 M1384 617.5H1387 M1384 623.5H1387 M1382 629.5H1387 M1384 635.5H1387 M1384 641.5H1387 M1384 647.5H1387 M1382 653.5H1387 M1384 659.5H1387 M1384 665.5H1387 M1384 672.5H1387 M1382 678.5H1387 M1384 684.5H1387 M1384 690.5H1387 M1384 696.5H1387 M1382 702.5H1387 M1441.5 704V708.5 M1500.5 704V708.5 M1559.5 704V708.5 M1618.5 704V708.5 M1677.5 704V708.5 M1736.5 704V708.5 M1796.5 704V708.5" stroke="#111" stroke-width="1"/>
<text x="1377" y="588.0" font-size="8.6" text-anchor="end" letter-spacing="-0.6" fill="#222" font-family="Liberation Sans">10000000</text>
<text x="1377" y="607.5" font-size="8.6" text-anchor="end" letter-spacing="-0.6" fill="#222" font-family="Liberation Sans">8000000</text>
<text x="1377" y="632.0" font-size="8.6" text-anchor="end" letter-spacing="-0.6" fill="#222" font-family="Liberation Sans">6000000</text>
<text x="1377" y="656.3" font-size="8.6" text-anchor="end" letter-spacing="-0.6" fill="#222" font-family="Liberation Sans">4000000</text>
<text x="1377" y="680.8" font-size="8.6" text-anchor="end" letter-spacing="-0.6" fill="#222" font-family="Liberation Sans">2000000</text>
<text x="1377" y="700.0" font-size="8.6" text-anchor="end" letter-spacing="-0.6" fill="#222" font-family="Liberation Sans">0</text>
<text x="1441.5" y="722" font-size="8.6" text-anchor="middle" letter-spacing="-0.6" fill="#222" font-family="Liberation Sans">1:00:00 AM</text>
<text x="1441.5" y="732" font-size="8.6" text-anchor="middle" letter-spacing="-0.6" fill="#222" font-family="Liberation Sans">5/2/2023</text>
<text x="1500.5" y="722" font-size="8.6" text-anchor="middle" letter-spacing="-0.6" fill="#222" font-family="Liberation Sans">1:00:00 AM</text>
<text x="1500.5" y="732" font-size="8.6" text-anchor="middle" letter-spacing="-0.6" fill="#222" font-family="Liberation Sans">5/6/2023</text>
<text x="1559.5" y="722" font-size="8.6" text-anchor="middle" letter-spacing="-0.6" fill="#222" font-family="Liberation Sans">1:00:00 AM</text>
<text x="1559.5" y="732" font-size="8.6" text-anchor="middle" letter-spacing="-0.6" fill="#222" font-family="Liberation Sans">5/10/2023</text>
<text x="1618.5" y="722" font-size="8.6" text-anchor="middle" letter-spacing="-0.6" fill="#222" font-family="Liberation Sans">1:00:00 AM</text>
<text x="1618.5" y="732" font-size="8.6" text-anchor="middle" letter-spacing="-0.6" fill="#222" font-family="Liberation Sans">5/14/2023</text>
<text x="1677.5" y="722" font-size="8.6" text-anchor="middle" letter-spacing="-0.6" fill="#222" font-family="Liberation Sans">1:00:00 AM</text>
<text x="1677.5" y="732" font-size="8.6" text-anchor="middle" letter-spacing="-0.6" fill="#222" font-family="Liberation Sans">5/18/2023</text>
<text x="1736.5" y="722" font-size="8.6" text-anchor="middle" letter-spacing="-0.6" fill="#222" font-family="Liberation Sans">1:00:00 AM</text>
<text x="1736.5" y="732" font-size="8.6" text-anchor="middle" letter-spacing="-0.6" fill="#222" font-family="Liberation Sans">5/22/2023</text>
<text x="1796.5" y="722" font-size="8.6" text-anchor="middle" letter-spacing="-0.6" fill="#222" font-family="Liberation Sans">1:00:00 AM</text>
<text x="1796.5" y="732" font-size="8.6" text-anchor="middle" letter-spacing="-0.6" fill="#222" font-family="Liberation Sans">5/26/2023</text>
<svg x="1388" y="710" width="30" height="30" viewBox="1388 710 30 30"><text x="1380.5" y="722" font-size="8.6" text-anchor="middle" letter-spacing="-0.6" fill="#222" font-family="Liberation Sans">1:00:00 AM</text><text x="1380.5" y="732" font-size="8.6" text-anchor="middle" letter-spacing="-0.6" fill="#222" font-family="Liberation Sans">5/1/2023</text></svg>
<path d="M1347 712.5H1378" stroke="#000" stroke-width="1.2"/><rect x="1361" y="711" width="3" height="3" fill="#000"/>
<path d="M1347 723.5H1378" stroke="#f00" stroke-width="1.2"/><rect x="1361" y="722" width="3" height="3" fill="#f00"/>
<rect x="1830" y="580" width="2.5" height="2.5" fill="#f00"/><rect x="1830" y="701" width="2.5" height="2.5" fill="#000"/>
<rect x="1338" y="742" width="494" height="21" fill="#f0f0f0"/>
<path d="M1338 741.5H1832" stroke="#8a8670" stroke-width="1"/>
<path d="M1709.5 743V762" stroke="#d8d8d8" stroke-width="1"/>
<text x="1341" y="758.5" font-size="16" fill="#000" font-family="Liberation Sans" letter-spacing="-0.5">Ready</text>
<text x="1714" y="758.5" font-size="16" fill="#000" font-family="Liberation Sans" letter-spacing="0.1">10:37:17 AM</text>
<rect x="1696" y="744.5" width="9" height="8" fill="#e8e8e8" stroke="#888" stroke-width="0.8"/><rect x="1697.5" y="746" width="6" height="4.5" fill="#1faa1f"/>
<rect x="1690" y="749.5" width="9" height="8" fill="#e8e8e8" stroke="#888" stroke-width="0.8"/><rect x="1691.5" y="751" width="6" height="4.5" fill="#1faa1f"/>
<path d="M1827 761h1.5M1824 761h1.5M1821 761h1.5M1827 758h1.5M1824 758h1.5M1827 755h1.5" stroke="#bbb" stroke-width="1.5"/>
<g transform="translate(0,280)">
<circle cx="1360.4" cy="281.3" r="10.3" fill="url(#blu)" stroke="#8aa6cf" stroke-width="1"/><circle cx="1360.4" cy="281.3" r="8.5" fill="none" stroke="#e2ecf8" stroke-width="1"/>
<text x="1360.4" y="286.8" font-size="15" font-weight="bold" fill="#fff" text-anchor="middle" font-family="Liberation Sans">?</text>
<rect x="1380.5" y="271.5" width="18" height="20" rx="1" fill="#f7f7f7" stroke="#3f5a86"/><rect x="1381" y="272" width="17" height="3.5" fill="#f6a0a0"/><path d="M1381 275.5H1398M1386 272V275.5" stroke="#e33" stroke-width="1"/>
<path d="M1383 279H1392M1383 282H1387M1383 285H1387M1383 288H1392" stroke="#9a9a9a" stroke-width="0.9"/>
<path d="M1387 284L1393 278.5V281.5H1397.5V286.5H1393V289.5Z" fill="#6ea4ea" stroke="#2d62b8" stroke-width="0.8"/>
<g fill="#dedede" stroke="#c4c4c4" stroke-width="0.9">
<rect x="1412" y="276" width="2.8" height="12" rx="1"/><path d="M1425.5 276V288L1416 282Z"/>
<path d="M1447 276V288L1438 282Z M1456.5 276V288L1447.5 282Z"/>
<path d="M1468 276V288L1477 282Z M1477.5 276V288L1486.5 282Z"/>
<path d="M1499 276V288L1508.5 282Z"/><rect x="1510" y="276" width="2.8" height="12" rx="1"/>
</g>
<circle cx="1533.5" cy="279" r="6.8" fill="#eef4fb" stroke="#888" stroke-width="1.6"/><rect x="1530.5" y="276" width="6" height="6" fill="none" stroke="#0a9a1a" stroke-width="1.8"/><path d="M1538.5 284L1544.5 291.5" stroke="#888" stroke-width="2.2"/>
<path d="M1564 271L1567.5 275H1565.3V279.5H1569.8V277.3L1574 281L1569.8 284.7V282.5H1565.3V287H1567.5L1564 291L1560.5 287H1562.7V282.5H1558.2V284.7L1554 281L1558.2 277.3V279.5H1562.7V275H1560.5Z" fill="#7fb2ef" stroke="#2d62b8" stroke-width="0.8"/>
<path d="M1587 270.5L1590.5 275H1588.5V279H1585.5V275H1583.5Z M1587 291.5L1590.5 287H1588.5V283H1585.5V287H1583.5Z" fill="#7fb2ef" stroke="#2d62b8" stroke-width="0.8"/>
<rect x="1593.5" y="270.5" width="7" height="21" fill="#f2c64a" stroke="#8a5a10" stroke-width="0.9"/><path d="M1596 274H1600M1597.5 277H1600M1596 280H1600M1597.5 283H1600M1596 286H1600" stroke="#8a5a10" stroke-width="0.7"/>
<rect x="1611.5" y="271.5" width="19.5" height="19.5" rx="2" fill="#f4f4f4" stroke="#cfcfcf"/><rect x="1614" y="274" width="14.5" height="14.5" fill="#cdcdcd"/><text x="1621.2" y="285.5" font-size="10" font-weight="bold" fill="#f4f4f4" text-anchor="middle" font-family="Liberation Sans">1:1</text>
<rect x="1645" y="275" width="4" height="12" fill="#9cc0f0" stroke="#2d62b8" stroke-width="0.9"/><rect x="1652.5" y="275" width="4" height="12" fill="#9cc0f0" stroke="#2d62b8" stroke-width="0.9"/>
<rect x="1674" y="272.5" width="11.5" height="10" fill="#7fd0ef" stroke="#3b7fd0"/>
<path d="M1670 282Q1670 280 1672.5 280H1687.5Q1690 280 1690 282V289Q1690 290.5 1688 290.5H1672Q1670 290.5 1670 289Z" fill="#d9d9d9" stroke="#777"/>
<path d="M1671.5 284.5H1688.5" stroke="#3a9a3a" stroke-width="1"/><rect x="1685" y="286.5" width="2" height="2" fill="#e00"/>
<rect x="1706.5" y="270.5" width="4" height="21" fill="#f2d27a" stroke="#8a5a10" stroke-width="0.9"/>
<path d="M1699 277L1704.5 272V275H1708.5V279H1704.5V282Z M1718.5 285.5L1713 280.5V283.5H1709V287.5H1713V290.5Z" fill="#7fb2ef" stroke="#2d62b8" stroke-width="0.8"/>
<path d="M1732 274H1729V288H1732 M1745 274H1748V288H1745" fill="none" stroke="#6a3a08" stroke-width="3.6"/><path d="M1732 274H1729V288H1732 M1745 274H1748V288H1745" fill="none" stroke="#f7c85a" stroke-width="1.8"/>
<path d="M1724.5 279.5H1731L1735 278L1740 282L1744 282.3H1751" fill="none" stroke="#c05a90" stroke-width="1" opacity="0.9"/><rect x="1733.5" y="276.5" width="3" height="3" fill="#b03a7a"/><rect x="1739" y="280.5" width="3" height="3" fill="#b03a7a"/>
<path d="M1759.5 289Q1762 289 1762 285V277Q1762 273 1764.5 273" fill="none" stroke="#c8c8c8" stroke-width="1"/><path d="M1766.5 277H1765V287H1766.5 M1773.5 277H1775V287H1773.5 M1767.5 279.5L1772 284.5M1772 279.5L1767.5 284.5" fill="none" stroke="#c8c8c8" stroke-width="1"/>
</g>
</svg>
<svg class="a" style="left:1328px;top:815px" width="514" height="238" viewBox="1328 815 514 238">
<rect x="1330" y="817" width="510" height="234" fill="#f3f6fb"/>
<path d="M1330 817.5H1838.5M1330.5 817V1050" stroke="#fff" stroke-width="1"/><path d="M1839.2 817V1050.5H1330" fill="none" stroke="#686868" stroke-width="1.7"/>
<rect x="1337.5" y="824.5" width="495" height="219" fill="#ece9da" stroke="#8a8670" stroke-width="1"/>
<rect x="1338" y="825" width="494" height="34" fill="#fff"/>
<path d="M1338 859.5H1832" stroke="#8a8670" stroke-width="1.2"/>
<path d="M1388 866.5H1832 M1388 872.5H1832 M1388 878.5H1832 M1388 890.5H1832 M1388 897.5H1832 M1388 903.5H1832 M1388 915.5H1832 M1388 921.5H1832 M1388 927.5H1832 M1388 939.5H1832 M1388 945.5H1832 M1388 952.5H1832 M1388 964.5H1832 M1388 970.5H1832 M1388 976.5H1832" stroke="#dedbca" stroke-width="1"/>
<path d="M1388 884.5H1832 M1388 909.5H1832 M1388 933.5H1832 M1388 958.5H1832 M1441.5 860V982 M1500.5 860V982 M1559.5 860V982 M1618.5 860V982 M1677.5 860V982 M1736.5 860V982 M1796.5 860V982" stroke="#c6c2ac" stroke-width="1"/>
<path d="M1387.5 860V983 M1338 983H1832 M1387.5 983V1021" stroke="#8a8670" stroke-width="1.3"/>
<path d="M1382 860.5H1387 M1384 866.5H1387 M1384 872.5H1387 M1384 878.5H1387 M1382 884.5H1387 M1384 890.5H1387 M1384 897.5H1387 M1384 903.5H1387 M1382 909.5H1387 M1384 915.5H1387 M1384 921.5H1387 M1384 927.5H1387 M1382 933.5H1387 M1384 939.5H1387 M1384 945.5H1387 M1384 952.5H1387 M1382 958.5H1387 M1384 964.5H1387 M1384 970.5H1387 M1384 976.5H1387 M1382 982.5H1387 M1441.5 984V988.5 M1500.5 984V988.5 M1559.5 984V988.5 M1618.5 984V988.5 M1677.5 984V988.5 M1736.5 984V988.5 M1796.5 984V988.5" stroke="#111" stroke-width="1"/>
<text x="1377" y="868.0" font-size="8.6" text-anchor="end" letter-spacing="-0.6" fill="#222" font-family="Liberation Sans">10000000</text>
<text x="1377" y="887.5" font-size="8.6" text-anchor="end" letter-spacing="-0.6" fill="#222" font-family="Liberation Sans">8000000</text>
<text x="1377" y="912.0" font-size="8.6" text-anchor="end" letter-spacing="-0.6" fill="#222" font-family="Liberation Sans">6000000</text>
<text x="1377" y="936.3" font-size="8.6" text-anchor="end" letter-spacing="-0.6" fill="#222" font-family="Liberation Sans">4000000</text>
<text x="1377" y="960.8" font-size="8.6" text-anchor="end" letter-spacing="-0.6" fill="#222" font-family="Liberation Sans">2000000</text>
<text x="1377" y="980.0" font-size="8.6" text-anchor="end" letter-spacing="-0.6" fill="#222" font-family="Liberation Sans">0</text>
<text x="1441.5" y="1002" font-size="8.6" text-anchor="middle" letter-spacing="-0.6" fill="#222" font-family="Liberation Sans">1:00:00 AM</text>
<text x="1441.5" y="1012" font-size="8.6" text-anchor="middle" letter-spacing="-0.6" fill="#222" font-family="Liberation Sans">5/2/2023</text>
<text x="1500.5" y="1002" font-size="8.6" text-anchor="middle" letter-spacing="-0.6" fill="#222" font-family="Liberation Sans">1:00:00 AM</text>
<text x="1500.5" y="1012" font-size="8.6" text-anchor="middle" letter-spacing="-0.6" fill="#222" font-family="Liberation Sans">5/6/2023</text>
<text x="1559.5" y="1002" font-size="8.6" text-anchor="middle" letter-spacing="-0.6" fill="#222" font-family="Liberation Sans">1:00:00 AM</text>
<text x="1559.5" y="1012" font-size="8.6" text-anchor="middle" letter-spacing="-0.6" fill="#222" font-family="Liberation Sans">5/10/2023</text>
<text x="1618.5" y="1002" font-size="8.6" text-anchor="middle" letter-spacing="-0.6" fill="#222" font-family="Liberation Sans">1:00:00 AM</text>
<text x="1618.5" y="1012" font-size="8.6" text-anchor="middle" letter-spacing="-0.6" fill="#222" font-family="Liberation Sans">5/14/2023</text>
<text x="1677.5" y="1002" font-size="8.6" text-anchor="middle" letter-spacing="-0.6" fill="#222" font-family="Liberation Sans">1:00:00 AM</text>
<text x="1677.5" y="1012" font-size="8.6" text-anchor="middle" letter-spacing="-0.6" fill="#222" font-family="Liberation Sans">5/18/2023</text>
<text x="1736.5" y="1002" font-size="8.6" text-anchor="middle" letter-spacing="-0.6" fill="#222" font-family="Liberation Sans">1:00:00 AM</text>
<text x="1736.5" y="1012" font-size="8.6" text-anchor="middle" letter-spacing="-0.6" fill="#222" font-family="Liberation Sans">5/22/2023</text>
<text x="1796.5" y="1002" font-size="8.6" text-anchor="middle" letter-spacing="-0.6" fill="#222" font-family="Liberation Sans">1:00:00 AM</text>
<text x="1796.5" y="1012" font-size="8.6" text-anchor="middle" letter-spacing="-0.6" fill="#222" font-family="Liberation Sans">5/26/2023</text>
<svg x="1388" y="990" width="30" height="30" viewBox="1388 990 30 30"><text x="1380.5" y="1002" font-size="8.6" text-anchor="middle" letter-spacing="-0.6" fill="#222" font-family="Liberation Sans">1:00:00 AM</text><text x="1380.5" y="1012" font-size="8.6" text-anchor="middle" letter-spacing="-0.6" fill="#222" font-family="Liberation Sans">5/1/2023</text></svg>
<path d="M1347 992.5H1378" stroke="#000" stroke-width="1.2"/><rect x="1361" y="991" width="3" height="3" fill="#000"/>
<path d="M1347 1003.5H1378" stroke="#f00" stroke-width="1.2"/><rect x="1361" y="1002" width="3" height="3" fill="#f00"/>
<rect x="1830" y="860" width="2.5" height="2.5" fill="#f00"/><rect x="1830" y="981" width="2.5" height="2.5" fill="#000"/>
<rect x="1338" y="1022" width="494" height="21" fill="#f0f0f0"/>
<path d="M1338 1021.5H1832" stroke="#8a8670" stroke-width="1"/>
<path d="M1709.5 1023V1042" stroke="#d8d8d8" stroke-width="1"/>
<text x="1341" y="1038.5" font-size="16" fill="#000" font-family="Liberation Sans" letter-spacing="-0.5">Ready</text>
<text x="1714" y="1038.5" font-size="16" fill="#000" font-family="Liberation Sans" letter-spacing="0.1">10:37:17 AM</text>
<rect x="1696" y="1024.5" width="9" height="8" fill="#e8e8e8" stroke="#888" stroke-width="0.8"/><rect x="1697.5" y="1026" width="6" height="4.5" fill="#1faa1f"/>
<rect x="1690" y="1029.5" width="9" height="8" fill="#e8e8e8" stroke="#888" stroke-width="0.8"/><rect x="1691.5" y="1031" width="6" height="4.5" fill="#1faa1f"/>
<path d="M1827 1041h1.5M1824 1041h1.5M1821 1041h1.5M1827 1038h1.5M1824 1038h1.5M1827 1035h1.5" stroke="#bbb" stroke-width="1.5"/>
<g transform="translate(0,560)">
<circle cx="1360.4" cy="281.3" r="10.3" fill="url(#blu)" stroke="#8aa6cf" stroke-width="1"/><circle cx="1360.4" cy="281.3" r="8.5" fill="none" stroke="#e2ecf8" stroke-width="1"/>
<text x="1360.4" y="286.8" font-size="15" font-weight="bold" fill="#fff" text-anchor="middle" font-family="Liberation Sans">?</text>
<rect x="1380.5" y="271.5" width="18" height="20" rx="1" fill="#f7f7f7" stroke="#3f5a86"/><rect x="1381" y="272" width="17" height="3.5" fill="#f6a0a0"/><path d="M1381 275.5H1398M1386 272V275.5" stroke="#e33" stroke-width="1"/>
<path d="M1383 279H1392M1383 282H1387M1383 285H1387M1383 288H1392" stroke="#9a9a9a" stroke-width="0.9"/>
<path d="M1387 284L1393 278.5V281.5H1397.5V286.5H1393V289.5Z" fill="#6ea4ea" stroke="#2d62b8" stroke-width="0.8"/>
<g fill="#dedede" stroke="#c4c4c4" stroke-width="0.9">
<rect x="1412" y="276" width="2.8" height="12" rx="1"/><path d="M1425.5 276V288L1416 282Z"/>
<path d="M1447 276V288L1438 282Z M1456.5 276V288L1447.5 282Z"/>
<path d="M1468 276V288L1477 282Z M1477.5 276V288L1486.5 282Z"/>
<path d="M1499 276V288L1508.5 282Z"/><rect x="1510" y="276" width="2.8" height="12" rx="1"/>
</g>
<circle cx="1533.5" cy="279" r="6.8" fill="#eef4fb" stroke="#888" stroke-width="1.6"/><rect x="1530.5" y="276" width="6" height="6" fill="none" stroke="#0a9a1a" stroke-width="1.8"/><path d="M1538.5 284L1544.5 291.5" stroke="#888" stroke-width="2.2"/>
<path d="M1564 271L1567.5 275H1565.3V279.5H1569.8V277.3L1574 281L1569.8 284.7V282.5H1565.3V287H1567.5L1564 291L1560.5 287H1562.7V282.5H1558.2V284.7L1554 281L1558.2 277.3V279.5H1562.7V275H1560.5Z" fill="#7fb2ef" stroke="#2d62b8" stroke-width="0.8"/>
<path d="M1587 270.5L1590.5 275H1588.5V279H1585.5V275H1583.5Z M1587 291.5L1590.5 287H1588.5V283H1585.5V287H1583.5Z" fill="#7fb2ef" stroke="#2d62b8" stroke-width="0.8"/>
<rect x="1593.5" y="270.5" width="7" height="21" fill="#f2c64a" stroke="#8a5a10" stroke-width="0.9"/><path d="M1596 274H1600M1597.5 277H1600M1596 280H1600M1597.5 283H1600M1596 286H1600" stroke="#8a5a10" stroke-width="0.7"/>
<rect x="1611.5" y="271.5" width="19.5" height="19.5" rx="2" fill="#f4f4f4" stroke="#cfcfcf"/><rect x="1614" y="274" width="14.5" height="14.5" fill="#cdcdcd"/><text x="1621.2" y="285.5" font-size="10" font-weight="bold" fill="#f4f4f4" text-anchor="middle" font-family="Liberation Sans">1:1</text>
<rect x="1645" y="275" width="4" height="12" fill="#9cc0f0" stroke="#2d62b8" stroke-width="0.9"/><rect x="1652.5" y="275" width="4" height="12" fill="#9cc0f0" stroke="#2d62b8" stroke-width="0.9"/>
<rect x="1674" y="272.5" width="11.5" height="10" fill="#7fd0ef" stroke="#3b7fd0"/>
<path d="M1670 282Q1670 280 1672.5 280H1687.5Q1690 280 1690 282V289Q1690 290.5 1688 290.5H1672Q1670 290.5 1670 289Z" fill="#d9d9d9" stroke="#777"/>
<path d="M1671.5 284.5H1688.5" stroke="#3a9a3a" stroke-width="1"/><rect x="1685" y="286.5" width="2" height="2" fill="#e00"/>
<rect x="1706.5" y="270.5" width="4" height="21" fill="#f2d27a" stroke="#8a5a10" stroke-width="0.9"/>
<path d="M1699 277L1704.5 272V275H1708.5V279H1704.5V282Z M1718.5 285.5L1713 280.5V283.5H1709V287.5H1713V290.5Z" fill="#7fb2ef" stroke="#2d62b8" stroke-width="0.8"/>
<path d="M1732 274H1729V288H1732 M1745 274H1748V288H1745" fill="none" stroke="#6a3a08" stroke-width="3.6"/><path d="M1732 274H1729V288H1732 M1745 274H1748V288H1745" fill="none" stroke="#f7c85a" stroke-width="1.8"/>
<path d="M1724.5 279.5H1731L1735 278L1740 282L1744 282.3H1751" fill="none" stroke="#c05a90" stroke-width="1" opacity="0.9"/><rect x="1733.5" y="276.5" width="3" height="3" fill="#b03a7a"/><rect x="1739" y="280.5" width="3" height="3" fill="#b03a7a"/>
<path d="M1759.5 289Q1762 289 1762 285V277Q1762 273 1764.5 273" fill="none" stroke="#c8c8c8" stroke-width="1"/><path d="M1766.5 277H1765V287H1766.5 M1773.5 277H1775V287H1773.5 M1767.5 279.5L1772 284.5M1772 279.5L1767.5 284.5" fill="none" stroke="#c8c8c8" stroke-width="1"/>
</g>
</svg>
<div class="ptitle" style="left:1310px;top:228px">kWh Trend</div>
<div class="ptitle" style="left:1310px;top:508px">Cost Trend</div>
<div class="ptitle" style="left:1310px;top:788px">Carbon Footprint Trend</div>
<div class="ptitle" style="left:80px;top:658px">Log</div>

<div class="a" style="left:0;top:0;width:1280px;height:1032px;overflow:hidden;pointer-events:none">
<style>.lt{position:absolute;height:31px;border:1px solid #000;font-size:16px;font-weight:bold;text-align:center;line-height:29px}</style>
<div class="lt" style="left:200px;top:657px;width:201px;background:#9c9ccc">kWh</div>
<div class="lt" style="left:400px;top:657px;width:201px;background:#9c9ccc">Cost</div>
<div class="lt" style="left:600px;top:657px;width:201px;background:#9c9ccc">CO2 Emissions</div>
<div class="lt" style="left:800px;top:657px;width:201px;background:#9c9ccc">MTD</div>
<div class="lt" style="left:1000px;top:657px;width:201px;background:#9c9ccc">YTD</div>
<div class="lt" style="left:140px;top:687px;width:61px;background:#9c9ccc">Jan</div>
<div class="lt" style="left:200px;top:687px;width:201px;background:#ffffff">0.00 kWh</div>
<div class="lt" style="left:400px;top:687px;width:201px;background:#ffffff">0.00 Rs</div>
<div class="lt" style="left:600px;top:687px;width:201px;background:#ffffff">0.00 kg</div>
<div class="lt" style="left:800px;top:687px;width:201px;background:#ffffff">0.00 %</div>
<div class="lt" style="left:1000px;top:687px;width:201px;background:#ffffff">0.00 %</div>
<div class="lt" style="left:140px;top:717px;width:61px;background:#9c9ccc">Feb</div>
<div class="lt" style="left:200px;top:717px;width:201px;background:#ffff99">0.00 kWh</div>
<div class="lt" style="left:400px;top:717px;width:201px;background:#ffff99">0.00 Rs</div>
<div class="lt" style="left:600px;top:717px;width:201px;background:#ffff99">0.00 kg</div>
<div class="lt" style="left:800px;top:717px;width:201px;background:#ffff99">0.00 %</div>
<div class="lt" style="left:1000px;top:717px;width:201px;background:#ffff99">0.00 %</div>
<div class="lt" style="left:140px;top:747px;width:61px;background:#9c9ccc">Mar</div>
<div class="lt" style="left:200px;top:747px;width:201px;background:#ffffff">0.00 kWh</div>
<div class="lt" style="left:400px;top:747px;width:201px;background:#ffffff">0.00 Rs</div>
<div class="lt" style="left:600px;top:747px;width:201px;background:#ffffff">0.00 kg</div>
<div class="lt" style="left:800px;top:747px;width:201px;background:#ffffff">0.00 %</div>
<div class="lt" style="left:1000px;top:747px;width:201px;background:#ffffff">0.00 %</div>
<div class="lt" style="left:140px;top:777px;width:61px;background:#9c9ccc">Apr</div>
<div class="lt" style="left:200px;top:777px;width:201px;background:#ffff99">0.00 kWh</div>
<div class="lt" style="left:400px;top:777px;width:201px;background:#ffff99">0.00 Rs</div>
<div class="lt" style="left:600px;top:777px;width:201px;background:#ffff99">0.00 kg</div>
<div class="lt" style="left:800px;top:777px;width:201px;background:#ffff99">0.00 %</div>
<div class="lt" style="left:1000px;top:777px;width:201px;background:#ffff99">0.00 %</div>
<div class="lt" style="left:140px;top:807px;width:61px;background:#9c9ccc">May</div>
<div class="lt" style="left:200px;top:807px;width:201px;background:#ffffff">280089.00 kWh</div>
<div class="lt" style="left:400px;top:807px;width:201px;background:#ffffff">5321691.00 Rs</div>
<div class="lt" style="left:600px;top:807px;width:201px;background:#ffffff">42013.35 kg</div>
<div class="lt" style="left:800px;top:807px;width:201px;background:#ffffff">46.78 %</div>
<div class="lt" style="left:1000px;top:807px;width:201px;background:#ffffff">89.36 %</div>
<div class="lt" style="left:140px;top:837px;width:61px;background:#9c9ccc">Jun</div>
<div class="lt" style="left:200px;top:837px;width:201px;background:#ffff99">0.00 kWh</div>
<div class="lt" style="left:400px;top:837px;width:201px;background:#ffff99">0.00 Rs</div>
<div class="lt" style="left:600px;top:837px;width:201px;background:#ffff99">0.00 kg</div>
<div class="lt" style="left:800px;top:837px;width:201px;background:#ffff99">0.00 %</div>
<div class="lt" style="left:1000px;top:837px;width:201px;background:#ffff99">0.00 %</div>
<div class="lt" style="left:140px;top:867px;width:61px;background:#9c9ccc">Jul</div>
<div class="lt" style="left:200px;top:867px;width:201px;background:#ffffff">0.00 kWh</div>
<div class="lt" style="left:400px;top:867px;width:201px;background:#ffffff">0.00 Rs</div>
<div class="lt" style="left:600px;top:867px;width:201px;background:#ffffff">0.00 kg</div>
<div class="lt" style="left:800px;top:867px;width:201px;background:#ffffff">0.00 %</div>
<div class="lt" style="left:1000px;top:867px;width:201px;background:#ffffff">0.00 %</div>
<div class="lt" style="left:140px;top:897px;width:61px;background:#9c9ccc">Aug</div>
<div class="lt" style="left:200px;top:897px;width:201px;background:#ffff99">0.00 kWh</div>
<div class="lt" style="left:400px;top:897px;width:201px;background:#ffff99">0.00 Rs</div>
<div class="lt" style="left:600px;top:897px;width:201px;background:#ffff99">0.00 kg</div>
<div class="lt" style="left:800px;top:897px;width:201px;background:#ffff99">0.00 %</div>
<div class="lt" style="left:1000px;top:897px;width:201px;background:#ffff99">0.00 %</div>
<div class="lt" style="left:140px;top:927px;width:61px;background:#9c9ccc">Sep</div>
<div class="lt" style="left:200px;top:927px;width:201px;background:#ffffff">0.00 kWh</div>
<div class="lt" style="left:400px;top:927px;width:201px;background:#ffffff">0.00 Rs</div>
<div class="lt" style="left:600px;top:927px;width:201px;background:#ffffff">0.00 kg</div>
<div class="lt" style="left:800px;top:927px;width:201px;background:#ffffff">0.00 %</div>
<div class="lt" style="left:1000px;top:927px;width:201px;background:#ffffff">0.00 %</div>
<div class="lt" style="left:140px;top:957px;width:61px;background:#9c9ccc">Oct</div>
<div class="lt" style="left:200px;top:957px;width:201px;background:#ffff99">0.00 kWh</div>
<div class="lt" style="left:400px;top:957px;width:201px;background:#ffff99">0.00 Rs</div>
<div class="lt" style="left:600px;top:957px;width:201px;background:#ffff99">0.00 kg</div>
<div class="lt" style="left:800px;top:957px;width:201px;background:#ffff99">0.00 %</div>
<div class="lt" style="left:1000px;top:957px;width:201px;background:#ffff99">0.00 %</div>
<div class="lt" style="left:140px;top:987px;width:61px;background:#9c9ccc">Nov</div>
<div class="lt" style="left:200px;top:987px;width:201px;background:#ffffff">0.00 kWh</div>
<div class="lt" style="left:400px;top:987px;width:201px;background:#ffffff">0.00 Rs</div>
<div class="lt" style="left:600px;top:987px;width:201px;background:#ffffff">0.00 kg</div>
<div class="lt" style="left:800px;top:987px;width:201px;background:#ffffff">0.00 %</div>
<div class="lt" style="left:1000px;top:987px;width:201px;background:#ffffff">0.00 %</div>
<div class="lt" style="left:140px;top:1017px;width:61px;background:#9c9ccc">Dec</div>
<div class="lt" style="left:200px;top:1017px;width:201px;background:#ffff99">0.00 kWh</div>
<div class="lt" style="left:400px;top:1017px;width:201px;background:#ffff99">0.00 Rs</div>
<div class="lt" style="left:600px;top:1017px;width:201px;background:#ffff99">0.00 kg</div>
<div class="lt" style="left:800px;top:1017px;width:201px;background:#ffff99">0.00 %</div>
<div class="lt" style="left:1000px;top:1017px;width:201px;background:#ffff99">0.00 %</div>
</div>
<div id="task" class="a"></div>
<svg class="a" style="left:830px;top:1032px" width="270" height="48" viewBox="830 1032 270 48">
<defs>
<linearGradient id="win" x1="0" y1="0" x2="1" y2="1"><stop offset="0" stop-color="#7fdcfb"/><stop offset="1" stop-color="#1a9fe8"/></linearGradient>
<linearGradient id="olk" x1="0" y1="0" x2="1" y2="1"><stop offset="0" stop-color="#3fc0f5"/><stop offset="1" stop-color="#0a64c8"/></linearGradient>
<linearGradient id="xl" x1="0" y1="0" x2="1" y2="0"><stop offset="0" stop-color="#1b7a43"/><stop offset="1" stop-color="#33c481"/></linearGradient>
<linearGradient id="dev" x1="0" y1="0" x2="0" y2="1"><stop offset="0" stop-color="#3ab0f0"/><stop offset="1" stop-color="#0f6cc8"/></linearGradient>
</defs>
<defs><linearGradient id="win2" gradientUnits="userSpaceOnUse" x1="839" y1="1045" x2="862" y2="1068"><stop offset="0" stop-color="#95defb"/><stop offset="0.5" stop-color="#3ec4f8"/><stop offset="1" stop-color="#109cf0"/></linearGradient>
<linearGradient id="olb" gradientUnits="userSpaceOnUse" x1="888" y1="1050" x2="906" y2="1067"><stop offset="0" stop-color="#1a8ce0"/><stop offset="1" stop-color="#28a8f0"/></linearGradient></defs>
<rect x="839" y="1045" width="11.1" height="11" rx="1" fill="url(#win2)"/><rect x="850.9" y="1045" width="11.2" height="11" rx="1" fill="url(#win2)"/>
<rect x="839" y="1057" width="11.1" height="11" rx="1" fill="url(#win2)"/><rect x="850.9" y="1057" width="11.2" height="11" rx="1" fill="url(#win2)"/>
<rect x="888.2" y="1045" width="17.8" height="22" rx="1.3" fill="url(#olb)"/>
<rect x="888.2" y="1045" width="17.8" height="4" rx="1" fill="#0a64c8"/>
<rect x="895" y="1049" width="5.5" height="5.5" fill="#0f78d4"/><rect x="900.5" y="1049" width="5.5" height="5.5" fill="#4fd0f8"/>
<rect x="895" y="1054.5" width="5.5" height="4" fill="#0a64c8"/><rect x="900.5" y="1054.5" width="5.5" height="4" fill="#28a8f0"/>
<path d="M888.2 1058L897 1062L906 1056V1066Q906 1067 905 1067H889.2Q888.2 1067 888.2 1066Z" fill="#2aa6ee"/>
<rect x="883" y="1050" width="12" height="12" rx="1.2" fill="#0f6ad0"/>
<ellipse cx="889" cy="1055.9" rx="2.6" ry="3" fill="none" stroke="#fff" stroke-width="1.5"/>
<rect x="892.2" y="1073" width="6" height="2.6" rx="1.3" fill="#9a9a9a"/>
<rect x="919.4" y="1036.4" width="39.2" height="39" rx="4" fill="#37372f"/>
<rect x="927" y="1044" width="18" height="18" rx="1.8" fill="#ededed"/>
<g fill="#e03a1a"><rect x="929" y="1046" width="3" height="3" rx="0.8"/><rect x="933" y="1046" width="3" height="3" rx="0.5"/><rect x="937" y="1046" width="3" height="3" rx="0.8"/><rect x="929" y="1050" width="3" height="3" rx="0.5"/><rect x="929" y="1054" width="3" height="3" rx="0.8"/></g>
<path d="M941.5 1049V1062M932.5 1058.5H944.5" stroke="#9aa0a6" stroke-width="2.4"/>
<circle cx="948.5" cy="1057.5" r="2.3" fill="none" stroke="#29a8f5" stroke-width="1.8"/><circle cx="940.5" cy="1065.5" r="2.3" fill="none" stroke="#29a8f5" stroke-width="1.8"/>
<path d="M944.5 1058.2L946.5 1057.8M941 1062L940.7 1063.5" stroke="#29a8f5" stroke-width="1.8"/>
<rect x="931" y="1072" width="16" height="3" rx="1.5" fill="#4cc2ff"/>
<g fill="none" stroke="#f2b700" stroke-width="3.4" stroke-linejoin="miter">
<path d="M972.5 1054V1045.5H981 M985 1045.5H993.5V1054 M993.5 1058V1066.5H985"/>
<path d="M974 1047L983 1054.5L992 1047 M983 1054.5V1058.5L992 1065" stroke-width="2.6"/>
</g>
<rect x="980" y="1073" width="6" height="2.6" rx="1.3" fill="#9a9a9a"/>
<rect x="1020.2" y="1045" width="18.1" height="21.6" rx="1.5" fill="#185c37"/>
<rect x="1020.2" y="1045" width="18.1" height="6" rx="1.5" fill="#21a366"/>
<rect x="1029" y="1045" width="9.3" height="6" fill="#33c481"/>
<rect x="1020.2" y="1050.5" width="18.1" height="5.5" fill="#21a366"/>
<rect x="1020.2" y="1055.5" width="18.1" height="5.5" fill="#107c41"/>
<rect x="1015" y="1050" width="12" height="12" rx="1.2" fill="#107c41"/>
<path d="M1018 1052.8L1024 1059.2M1024 1052.8L1018 1059.2" stroke="#fff" stroke-width="1.9"/>
<rect x="1024" y="1073" width="6" height="2.6" rx="1.3" fill="#9a9a9a"/>
<defs><linearGradient id="ph" x1="0" y1="0" x2="0" y2="1"><stop offset="0" stop-color="#5ee0fa"/><stop offset="0.45" stop-color="#2fb8f0"/><stop offset="0.5" stop-color="#1c9ae6"/><stop offset="0.72" stop-color="#1590e0"/><stop offset="0.75" stop-color="#0a6acc"/><stop offset="1" stop-color="#1658a8"/></linearGradient></defs>
<path d="M1060.3 1047Q1060.3 1045 1062.3 1045H1080Q1082 1045 1082 1047V1060.5H1060.3Z" fill="#1f8fe0"/>
<path d="M1059 1060H1083.5V1062H1059Z" fill="#1a6fc8"/>
<rect x="1063.8" y="1048" width="10.4" height="18.6" rx="1" fill="url(#ph)"/>
<rect x="1067.5" y="1049.2" width="3" height="0.9" rx="0.4" fill="#1a70c0"/>
<rect x="1068" y="1073" width="6" height="2.6" rx="1.3" fill="#9a9a9a"/>
</svg>
<div class="a" style="left:1816px;top:1041px;width:81px;text-align:right;color:#e6e6e6;font-size:12px;line-height:16px">10:37<br>28/05/2023</div>
</body></html>
